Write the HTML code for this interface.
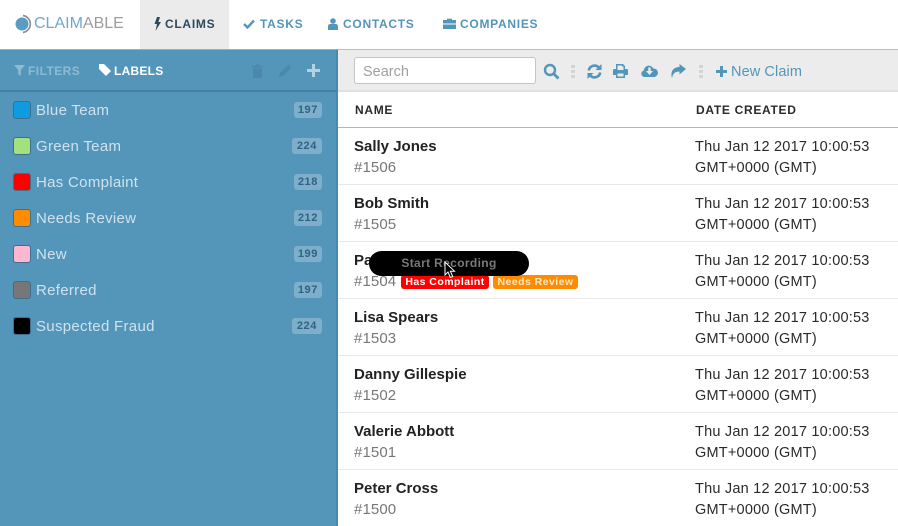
<!DOCTYPE html>
<html><head><meta charset="utf-8">
<style>
*{box-sizing:border-box}
html,body{margin:0;padding:0}
body{width:898px;height:526px;overflow:hidden;position:relative;background:#fff;font-family:"Liberation Sans",sans-serif;}
.a{position:absolute;white-space:nowrap}
.nav{font-size:12px;font-weight:bold;letter-spacing:.72px;color:#5495ba;line-height:14px;top:17px}
.lab{left:36px;margin-top:1px;font-size:15px;letter-spacing:.3px;color:#cfe2ee;line-height:18px}
.sw{left:13px;width:18px;height:18px;border-radius:3px;border:1px solid #3f6f8f}
.cnt{right:576px;height:16px;line-height:16px;padding:0 4px;background:#7dafcb;border-radius:3px;color:#2f6284;font-size:11px;font-weight:bold;letter-spacing:.6px}
.nm{left:354px;margin-top:1px;font-size:15px;font-weight:bold;letter-spacing:0;color:#222;line-height:18px}
.id{left:354px;margin-top:1px;font-size:15px;letter-spacing:.1px;color:#777;line-height:18px}
.dt{left:695px;margin-top:1px;font-size:14.5px;letter-spacing:.22px;color:#2a2a2a;line-height:21px;white-space:nowrap}
.hr{left:338px;right:0;height:1px;background:#e8e8e8}
.tag{height:14px;line-height:14px;border-radius:3px;color:#fff;font-size:10.5px;font-weight:bold;letter-spacing:.45px;text-align:center;top:275px}
svg{position:absolute;display:block}
</style></head><body>

<!-- top nav -->
<svg style="left:14px;top:13px" width="18" height="22" viewBox="0 0 18 22"><circle cx="8" cy="11" r="6.500" fill="#5a9cc2"/><path d="M9 2.500a8.600 8.600 0 0 1 0 17" fill="none" stroke="#8f8f8f" stroke-width="1.700"/></svg>
<div class="a" style="left:34px;top:13px;font-size:16px;line-height:22px;color:#6aaacd;letter-spacing:0">CLAIM<span style="color:#9c9c9c">ABLE</span></div>
<div class="a" style="left:140px;top:0;width:89px;height:49px;background:#ebebeb"></div>
<svg style="left:154px;top:17px" width="7" height="14" viewBox="0 0 7 14"><path d="M3 0h3L4.400 5H7L1.500 14 3 7H.5z" fill="#2c4a5e"/></svg>
<div class="a nav" style="left:165px;color:#2c4a5e">CLAIMS</div>
<svg style="left:243px;top:19px" width="12" height="10" viewBox="0 0 12 10"><path d="M1 5l3.500 3.500L11 1.500" fill="none" stroke="#5495ba" stroke-width="2.400"/></svg>
<div class="a nav" style="left:260px">TASKS</div>
<svg style="left:328px;top:18px" width="10" height="12" viewBox="0 0 10 12"><circle cx="5" cy="3" r="2.800" fill="#5495ba"/><path d="M0 12V8.500Q0 6 2.500 6h5Q10 6 10 8.500V12z" fill="#5495ba"/></svg>
<div class="a nav" style="left:343px">CONTACTS</div>
<svg style="left:443px;top:18px" width="13" height="11" viewBox="0 0 13 11"><path d="M4 2V.8h5V2h4v3.500H0V2zM0 6.500h13V11H0z" fill="#5495ba"/></svg>
<div class="a nav" style="left:460px">COMPANIES</div>

<!-- sidebar -->
<div class="a" style="left:0;top:49px;width:338px;height:477px;background:#5495ba;border-top:1px solid #a9a9a9"></div>
<div class="a" style="left:336px;top:50px;width:2px;height:476px;background:#4a88ad"></div>
<div class="a" style="left:0;top:90px;width:336px;height:2px;background:#467fa3"></div>
<svg style="left:14px;top:65px" width="11" height="11" viewBox="0 0 11 11"><path d="M0 0h11L6.800 5v6L4.200 9V5z" fill="#8fbad3"/></svg>
<div class="a" style="left:28px;top:64px;font-size:12px;line-height:14px;font-weight:bold;letter-spacing:.45px;color:#8fbad3">FILTERS</div>
<svg style="left:99px;top:64px" width="12" height="12" viewBox="0 0 12 12"><path d="M0 0h5l7 7-5 5-7-7z" fill="#fff"/></svg>
<div class="a" style="left:114px;top:64px;font-size:12px;line-height:14px;font-weight:bold;letter-spacing:.25px;color:#fff">LABELS</div>
<svg style="left:252px;top:64px" width="11" height="14" viewBox="0 0 11 14"><path d="M0 2h3.500V.5h4V2H11v1.500H0zM1 4.500h9V14H1z" fill="#4a88ad"/></svg>
<svg style="left:279px;top:64px" width="13" height="13" viewBox="0 0 13 13"><path d="M0 13l1-4L9.500.5l3 3L4 12z" fill="#4a88ad"/></svg>
<svg style="left:307px;top:64px" width="13" height="13" viewBox="0 0 13 13"><path d="M5 0h3v5h5v3H8v5H5V8H0V5h5z" fill="#b4d2e3"/></svg>

<div class="a sw" style="top:101px;background:#0f9be0"></div><div class="a lab" style="top:101px">Blue Team</div><div class="a cnt" style="top:102px">197</div>
<div class="a sw" style="top:137px;background:#a3e080"></div><div class="a lab" style="top:137px">Green Team</div><div class="a cnt" style="top:138px;padding:0 5px">224</div>
<div class="a sw" style="top:173px;background:#f00"></div><div class="a lab" style="top:173px">Has Complaint</div><div class="a cnt" style="top:174px">218</div>
<div class="a sw" style="top:209px;background:#ff8c00"></div><div class="a lab" style="top:209px">Needs Review</div><div class="a cnt" style="top:210px">212</div>
<div class="a sw" style="top:245px;background:#ffb6cf"></div><div class="a lab" style="top:245px">New</div><div class="a cnt" style="top:246px">199</div>
<div class="a sw" style="top:281px;background:#777"></div><div class="a lab" style="top:281px">Referred</div><div class="a cnt" style="top:282px">197</div>
<div class="a sw" style="top:317px;background:#000"></div><div class="a lab" style="top:317px">Suspected Fraud</div><div class="a cnt" style="top:318px;padding:0 5px">224</div>

<!-- toolbar -->
<div class="a" style="left:338px;top:49px;width:560px;height:43px;background:#ececec;border-top:1px solid #bdbdbd;border-bottom:2px solid #e0e0e0"></div>
<div class="a" style="left:354px;top:57px;width:182px;height:27px;background:#fff;border:1px solid #c4c4c4;border-radius:3px;font-size:14.5px;line-height:28px;padding-left:8px;letter-spacing:0;color:#a0a0a0">Search</div>
<svg style="left:543px;top:63px" width="17" height="17" viewBox="0 0 17 17"><circle cx="7" cy="7" r="5" fill="none" stroke="#5495ba" stroke-width="2.400"/><path d="M10.800 10.800L15.500 15.500" stroke="#5495ba" stroke-width="2.800"/></svg>
<svg style="left:571px;top:65px" width="4" height="13" viewBox="0 0 4 13"><path d="M0 0h4v3H0zM0 5h4v3H0zM0 10h4v3H0z" fill="#d4d4d4"/></svg>
<svg style="left:587px;top:64px" width="15" height="15" viewBox="0 0 15 15"><path d="M1.800 6.500A5.800 5.800 0 0 1 11.800 3.500" fill="none" stroke="#5495ba" stroke-width="2.600"/><path d="M14.500 0v6h-6z" fill="#5495ba"/><path d="M13.200 8.500A5.800 5.800 0 0 1 3.200 11.500" fill="none" stroke="#5495ba" stroke-width="2.600"/><path d="M.5 15V9h6z" fill="#5495ba"/></svg>
<svg style="left:613px;top:64px" width="15" height="14" viewBox="0 0 15 14"><path d="M3 0h7l2 2v3h1.500Q15 5 15 6.500V11h-3v3H3v-3H0V6.500Q0 5 1.500 5H3zM4.500 1.500V6h6V2.500h-1.500v-1zM4.500 9.500v3h6v-3z" fill="#5495ba" fill-rule="evenodd"/></svg>
<svg style="left:641px;top:64px" width="17" height="13" viewBox="0 0 17 13"><path d="M3.500 13A3.300 3.300 0 0 1 2.800 6.500a5 5 0 0 1 9.500-2A4.300 4.300 0 0 1 13.500 13z" fill="#5495ba"/><path d="M7.300 3.500h2.400V7H12l-3.500 4L5 7h2.300z" fill="#ececec"/></svg>
<svg style="left:670px;top:64px" width="16" height="14" viewBox="0 0 16 14"><path d="M9.500 0L16 5 9.500 10.500V7.500C5.500 7.500 3 9 2 14 .2 8 3 3 9.500 3z" fill="#5495ba"/></svg>
<svg style="left:699px;top:65px" width="4" height="13" viewBox="0 0 4 13"><path d="M0 0h4v3H0zM0 5h4v3H0zM0 10h4v3H0z" fill="#d4d4d4"/></svg>
<svg style="left:716px;top:66px" width="11" height="11" viewBox="0 0 11 11"><path d="M4 0h3v4h4v3H7v4H4V7H0V4h4z" fill="#5495ba"/></svg>
<div class="a" style="left:731px;top:63px;font-size:14.5px;line-height:18px;letter-spacing:.1px;color:#5495ba">New Claim</div>

<!-- table head -->
<div class="a" style="left:355px;top:103px;font-size:12px;line-height:14px;font-weight:bold;letter-spacing:.7px;color:#2a2a2a">NAME</div>
<div class="a" style="left:696px;top:103px;font-size:12px;line-height:14px;font-weight:bold;letter-spacing:.7px;color:#2a2a2a">DATE CREATED</div>
<div class="a" style="left:338px;right:0;top:127px;height:1px;background:#b5b5b5"></div>

<!-- rows -->
<div class="a nm" style="top:137px">Sally Jones</div><div class="a id" style="top:158px">#1506</div>
<div class="a dt" style="top:136px">Thu Jan 12 2017 10:00:53<br>GMT+0000 (GMT)</div><div class="a hr" style="top:184px"></div>
<div class="a nm" style="top:194px">Bob Smith</div><div class="a id" style="top:215px">#1505</div>
<div class="a dt" style="top:193px">Thu Jan 12 2017 10:00:53<br>GMT+0000 (GMT)</div><div class="a hr" style="top:241px"></div>
<div class="a nm" style="top:251px">Paul Jones</div><div class="a id" style="top:272px">#1504</div>
<div class="a tag" style="left:401px;width:88px;background:#f00">Has Complaint</div>
<div class="a tag" style="left:493px;width:85px;background:#ff8c00;color:#fbe9c8">Needs Review</div>
<div class="a dt" style="top:250px">Thu Jan 12 2017 10:00:53<br>GMT+0000 (GMT)</div><div class="a hr" style="top:298px"></div>
<div class="a nm" style="top:308px">Lisa Spears</div><div class="a id" style="top:329px">#1503</div>
<div class="a dt" style="top:307px">Thu Jan 12 2017 10:00:53<br>GMT+0000 (GMT)</div><div class="a hr" style="top:355px"></div>
<div class="a nm" style="top:365px">Danny Gillespie</div><div class="a id" style="top:386px">#1502</div>
<div class="a dt" style="top:364px">Thu Jan 12 2017 10:00:53<br>GMT+0000 (GMT)</div><div class="a hr" style="top:412px"></div>
<div class="a nm" style="top:422px">Valerie Abbott</div><div class="a id" style="top:443px">#1501</div>
<div class="a dt" style="top:421px">Thu Jan 12 2017 10:00:53<br>GMT+0000 (GMT)</div><div class="a hr" style="top:469px"></div>
<div class="a nm" style="top:479px">Peter Cross</div><div class="a id" style="top:500px">#1500</div>
<div class="a dt" style="top:478px">Thu Jan 12 2017 10:00:53<br>GMT+0000 (GMT)</div>

<!-- recording pill -->
<div class="a" style="left:369px;top:251px;width:160px;height:25px;background:#000;border-radius:12.5px;color:#7a7a7a;font-size:12px;font-weight:bold;letter-spacing:.35px;line-height:24px;text-align:center">Start Recording</div>
<svg style="left:444px;top:261px" width="13" height="18" viewBox="0 0 13 18"><path d="M1 1v13l3-3 2.300 5.500 2.400-1-2.300-5.300H10.500z" fill="#000" stroke="#fff" stroke-width="1"/></svg>

</body></html>
